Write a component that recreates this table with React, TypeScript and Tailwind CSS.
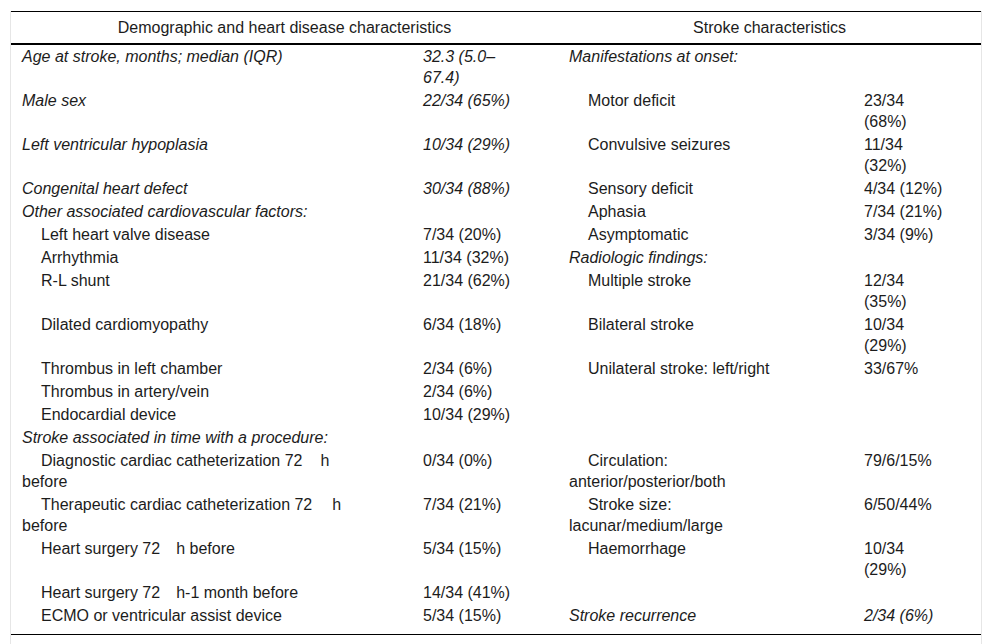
import React from "react";

type Cell = { t: React.ReactNode; i?: boolean; ind?: boolean };
type Row = [Cell | null, Cell | null, Cell | null, Cell | null];

const G = ({ w }: { w: number }) => (
  <span
    className={
      w === 18 ? "inline-block w-[18px]" : w === 20 ? "inline-block w-[20px]" : "inline-block w-[16px]"
    }
  />
);

const rows: Row[] = [
  [
    { t: "Age at stroke, months; median (IQR)", i: true },
    { t: <>32.3 (5.0–<br />67.4)</>, i: true },
    { t: "Manifestations at onset:", i: true },
    null,
  ],
  [
    { t: "Male sex", i: true },
    { t: "22/34 (65%)", i: true },
    { t: "Motor deficit", ind: true },
    { t: <>23/34<br />(68%)</> },
  ],
  [
    { t: "Left ventricular hypoplasia", i: true },
    { t: "10/34 (29%)", i: true },
    { t: "Convulsive seizures", ind: true },
    { t: <>11/34<br />(32%)</> },
  ],
  [
    { t: "Congenital heart defect", i: true },
    { t: "30/34 (88%)", i: true },
    { t: "Sensory deficit", ind: true },
    { t: "4/34 (12%)" },
  ],
  [
    { t: "Other associated cardiovascular factors:", i: true },
    null,
    { t: "Aphasia", ind: true },
    { t: "7/34 (21%)" },
  ],
  [
    { t: "Left heart valve disease", ind: true },
    { t: "7/34 (20%)" },
    { t: "Asymptomatic", ind: true },
    { t: "3/34 (9%)" },
  ],
  [
    { t: "Arrhythmia", ind: true },
    { t: "11/34 (32%)" },
    { t: "Radiologic findings:", i: true },
    null,
  ],
  [
    { t: "R-L shunt", ind: true },
    { t: "21/34 (62%)" },
    { t: "Multiple stroke", ind: true },
    { t: <>12/34<br />(35%)</> },
  ],
  [
    { t: "Dilated cardiomyopathy", ind: true },
    { t: "6/34 (18%)" },
    { t: "Bilateral stroke", ind: true },
    { t: <>10/34<br />(29%)</> },
  ],
  [
    { t: "Thrombus in left chamber", ind: true },
    { t: "2/34 (6%)" },
    { t: "Unilateral stroke: left/right", ind: true },
    { t: "33/67%" },
  ],
  [
    { t: "Thrombus in artery/vein", ind: true },
    { t: "2/34 (6%)" },
    null,
    null,
  ],
  [
    { t: "Endocardial device", ind: true },
    { t: "10/34 (29%)" },
    null,
    null,
  ],
  [
    { t: "Stroke associated in time with a procedure:", i: true },
    null,
    null,
    null,
  ],
  [
    { t: <>Diagnostic cardiac catheterization 72<G w={18} />h<br />before</>, ind: true },
    { t: "0/34 (0%)" },
    { t: <>Circulation:<br />anterior/posterior/both</>, ind: true },
    { t: "79/6/15%" },
  ],
  [
    { t: <>Therapeutic cardiac catheterization 72<G w={20} />h<br />before</>, ind: true },
    { t: "7/34 (21%)" },
    { t: <>Stroke size:<br />lacunar/medium/large</>, ind: true },
    { t: "6/50/44%" },
  ],
  [
    { t: <>Heart surgery 72<G w={16} />h before</>, ind: true },
    { t: "5/34 (15%)" },
    { t: "Haemorrhage", ind: true },
    { t: <>10/34<br />(29%)</> },
  ],
  [
    { t: <>Heart surgery 72<G w={16} />h-1 month before</>, ind: true },
    { t: "14/34 (41%)" },
    null,
    null,
  ],
  [
    { t: "ECMO or ventricular assist device", ind: true },
    { t: "5/34 (15%)" },
    { t: "Stroke recurrence", i: true },
    { t: "2/34 (6%)", i: true },
  ],
];

export default function App() {
  return (
    <div
      className="min-h-[644px] w-[992px] bg-white px-[10px] pt-[11px] text-[16px] leading-[21px] text-[#1c1c1c]"
      style={{ fontFamily: '"Liberation Sans", Arial, sans-serif' }}
    >
      <div className="min-h-[633px] border-x border-[#e6e6e6]">
        <table className="w-[970px] table-fixed border-collapse">
          <colgroup>
            <col className="w-[401px]" />
            <col className="w-[146px]" />
            <col className="w-[295px]" />
            <col className="w-[128px]" />
          </colgroup>
          <thead>
            <tr>
              <th
                colSpan={2}
                className="border-t border-b-2 border-black px-[11px] pt-[5px] pb-[5px] text-center font-normal"
              >
                Demographic and heart disease characteristics
              </th>
              <th
                colSpan={2}
                className="border-t border-b-2 border-black px-[11px] pt-[5px] pb-[5px] text-center font-normal"
              >
                Stroke characteristics
              </th>
            </tr>
          </thead>
          <tbody>
            {rows.map((r, ri) => {
              const last = ri === rows.length - 1;
              return (
                <tr key={ri}>
                  {r.map((c, ci) => (
                    <td
                      key={ci}
                      className={
                        "whitespace-nowrap px-[11px] align-top " +
                        (last ? "border-b border-black pt-px pb-[8px]" : "py-px")
                      }
                    >
                      {c ? (
                        <div className={(c.i ? "italic " : "") + (c.ind ? "indent-[19px]" : "")}>{c.t}</div>
                      ) : null}
                    </td>
                  ))}
                </tr>
              );
            })}
          </tbody>
        </table>
      </div>
    </div>
  );
}
